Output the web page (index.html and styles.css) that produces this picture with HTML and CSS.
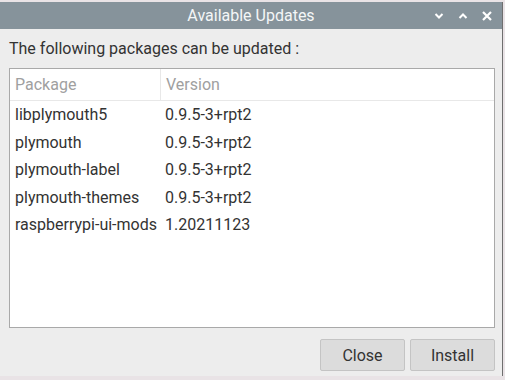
FILE: index.html
```html
<!DOCTYPE html>
<html lang="en">
<head>
    <meta charset="UTF-8">
    <title>Available Updates</title>
    <link rel="stylesheet" href="styles.css">
</head>
<body>
    <div class="window">
        <div class="titlebar">
            <span class="title">Available Updates</span>
            <div class="controls">
                <svg width="10" height="10" viewBox="0 0 10 10"><path d="M1.5 3 L5 6.5 L8.5 3" fill="none" stroke="#fff" stroke-width="2"/></svg>
                <svg width="10" height="10" viewBox="0 0 10 10"><path d="M1.5 7 L5 3.5 L8.5 7" fill="none" stroke="#fff" stroke-width="2"/></svg>
                <svg width="10" height="10" viewBox="0 0 10 10"><path d="M1 1 L9 9 M9 1 L1 9" fill="none" stroke="#fff" stroke-width="2.2"/></svg>
            </div>
        </div>

        <div class="content">
            <p class="label">The following packages can be updated :</p>

            <div class="list">
                <div class="row head">
                    <div class="col-name">Package</div>
                    <div class="col-ver">Version</div>
                </div>
                <div class="row"><div class="col-name">libplymouth5</div><div class="col-ver">0.9.5-3+rpt2</div></div>
                <div class="row"><div class="col-name">plymouth</div><div class="col-ver">0.9.5-3+rpt2</div></div>
                <div class="row"><div class="col-name">plymouth-label</div><div class="col-ver">0.9.5-3+rpt2</div></div>
                <div class="row"><div class="col-name">plymouth-themes</div><div class="col-ver">0.9.5-3+rpt2</div></div>
                <div class="row"><div class="col-name">raspberrypi-ui-mods</div><div class="col-ver">1.20211123</div></div>
            </div>

            <div class="buttons">
                <button>Close</button>
                <button>Install</button>
            </div>
        </div>
    </div>
</body>
</html>
```

FILE: styles.css
```css
/* Escritorio de fondo */
body {
    margin: 0;
    padding: 2px 3px 4px 0;
    background-color: #e9e3e6;
    font-family: 'Roboto', 'Liberation Sans', sans-serif;
    overflow: hidden;
}

/* Ventana */
.window {
    width: 502px;
    height: 374px;
    background-color: #ededed;
    display: flex;
    flex-direction: column;
    box-shadow: 1px 0 0 #6f6f6f;
}

.titlebar {
    height: 27px;
    background-color: #86939b;
    display: flex;
    align-items: center;
    justify-content: center;
    position: relative;
}

.title {
    color: #f4f6f7;
    font-size: 16px;
}

.controls {
    position: absolute;
    right: 10px;
    top: 9px;
    display: flex;
    gap: 14px;
}

.content {
    flex: 1;
    padding: 0 7px 0 9px;
    display: flex;
    flex-direction: column;
}

.label {
    margin: 10px 0 0 0;
    font-size: 16px;
    color: #333;
    height: 29px;
}

/* Lista de paquetes */
.list {
    height: 258px;
    background-color: #fff;
    border: 1px solid #a9a9a9;
}

.row {
    display: flex;
    height: 27.5px;
    align-items: center;
    font-size: 16px;
    color: #333;
}

.row.head {
    height: 31px;
    color: #a0a0a0;
    border-bottom: 1px solid #e8e8e8;
}

.col-name {
    box-sizing: border-box;
    width: 150px;
    padding-left: 5px;
    white-space: nowrap;
}

.col-ver {
    padding-left: 5px;
}

.row.head .col-ver {
    align-self: stretch;
    display: flex;
    align-items: center;
    border-left: 1px solid #e8e8e8;
}

/* Botones */
.buttons {
    display: flex;
    justify-content: flex-end;
    gap: 5px;
    margin-top: 11px;
}

button {
    width: 85px;
    height: 32px;
    font-family: inherit;
    font-size: 16px;
    color: #333;
    background-color: #dcdcdc;
    border: 1px solid #c4c4c4;
    border-radius: 2px;
}
```
